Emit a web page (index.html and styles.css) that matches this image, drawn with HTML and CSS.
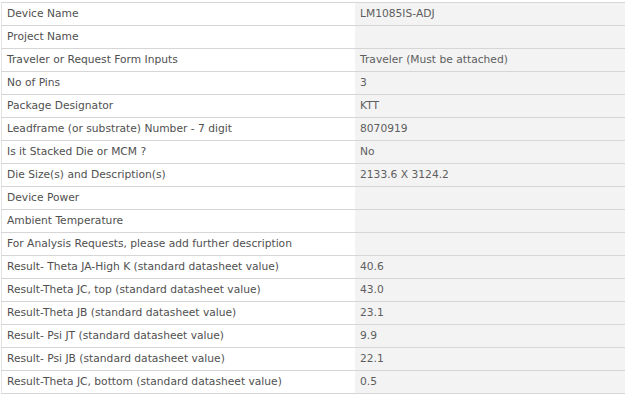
FILE: index.html
```html
<!DOCTYPE html>
<html lang="en">
<head>
<meta charset="UTF-8" />
<title>Thermal Request Details</title>
<link rel="stylesheet" href="styles.css">
</head>
<body>
  <table class="details">
    <tr><td class="label">Device Name</td><td class="value">LM1085IS-ADJ</td></tr>
    <tr><td class="label">Project Name</td><td class="value"></td></tr>
    <tr><td class="label">Traveler or Request Form Inputs</td><td class="value">Traveler (Must be attached)</td></tr>
    <tr><td class="label">No of Pins</td><td class="value">3</td></tr>
    <tr><td class="label">Package Designator</td><td class="value">KTT</td></tr>
    <tr><td class="label">Leadframe (or substrate) Number - 7 digit</td><td class="value">8070919</td></tr>
    <tr><td class="label">Is it Stacked Die or MCM ?</td><td class="value">No</td></tr>
    <tr><td class="label">Die Size(s) and Description(s)</td><td class="value">2133.6 X 3124.2</td></tr>
    <tr><td class="label">Device Power</td><td class="value"></td></tr>
    <tr><td class="label">Ambient Temperature</td><td class="value"></td></tr>
    <tr><td class="label">For Analysis Requests, please add further description</td><td class="value"></td></tr>
    <tr><td class="label">Result- Theta JA-High K (standard datasheet value)</td><td class="value">40.6</td></tr>
    <tr><td class="label">Result-Theta JC, top (standard datasheet value)</td><td class="value">43.0</td></tr>
    <tr><td class="label">Result-Theta JB (standard datasheet value)</td><td class="value">23.1</td></tr>
    <tr><td class="label">Result- Psi JT (standard datasheet value)</td><td class="value">9.9</td></tr>
    <tr><td class="label">Result- Psi JB (standard datasheet value)</td><td class="value">22.1</td></tr>
    <tr><td class="label">Result-Theta JC, bottom (standard datasheet value)</td><td class="value">0.5</td></tr>
  </table>
</body>
</html>
```

FILE: styles.css
```css
body {
    margin: 0;
    padding: 2px 0 0 1px;
    background-color: #ffffff;
    font-family: "DejaVu Sans", Verdana, sans-serif;
    font-size: 10.7px;
    color: #505050;
}
.details {
    border-collapse: collapse;
    width: 100%;
    border-left: 1px solid #e4e4e4;
}
.details td {
    line-height: 13px;
    padding: 4px 5px 5px;
    border-top: 1px solid #d6d6d6;
    border-bottom: 1px solid #d6d6d6;
    vertical-align: middle;
    white-space: nowrap;
}
.label {
    width: 343px;
    background-color: #ffffff;
}
.value {
    background-color: #f3f3f3;
    color: #5e5e5e;
}
```
